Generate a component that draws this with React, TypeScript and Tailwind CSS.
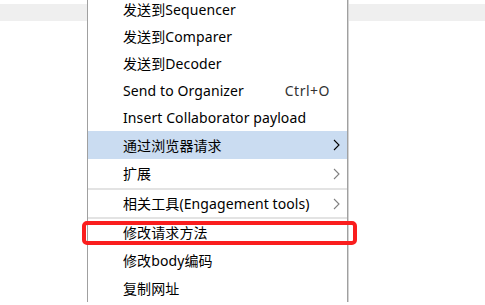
import React from "react";

type Item =
  | { kind: "item"; label: string; h: number; shortcut?: string; sub?: boolean; active?: boolean }
  | { kind: "sep" };

const items: Item[] = [
  { kind: "item", label: "发送到Sequencer", h: 27 },
  { kind: "item", label: "发送到Comparer", h: 27 },
  { kind: "item", label: "发送到Decoder", h: 27 },
  { kind: "item", label: "Send to Organizer", h: 27, shortcut: "Ctrl+O" },
  { kind: "item", label: "Insert Collaborator payload", h: 27 },
  { kind: "item", label: "通过浏览器请求", h: 28, sub: true, active: true },
  { kind: "item", label: "扩展", h: 29, sub: true },
  { kind: "sep" },
  { kind: "item", label: "相关工具(Engagement tools)", h: 27, sub: true },
  { kind: "sep" },
  { kind: "item", label: "修改请求方法", h: 27 },
  { kind: "item", label: "修改body编码", h: 28 },
  { kind: "item", label: "复制网址", h: 28 },
];

function Chevron({ dark }: { dark?: boolean }) {
  return (
    <svg width="7" height="12" viewBox="0 0 7 12" className="mr-[7px]">
      <path d="M1 1 L6 6 L1 11" fill="none" stroke={dark ? "#000" : "#808080"} strokeWidth="1.1" />
    </svg>
  );
}

export default function App() {
  return (
    <div
      className="relative w-[485px] h-[305px] overflow-hidden bg-white"
      style={{ fontFamily: '"Noto Sans", "Noto Sans CJK SC", sans-serif' }}
    >
      <div className="mt-[4px] h-[17px] bg-[#efefef]" />
      <div className="absolute left-[87px] top-[-4px] w-[261px] bg-white border-x border-[#a0a0a0] shadow-[1px_0_0_#d4d4d4] flex flex-col">
        {items.map((it, i) =>
          it.kind === "sep" ? (
            <div key={i} className="h-[2px] bg-[#e3e3e3]" />
          ) : (
            <div
              key={i}
              className={`flex items-center justify-between text-[14px] tracking-[0.1px] text-black ${it.active ? "bg-[#cadcf1]" : ""}`}
              style={{ height: it.h }}
            >
              <span className="pl-[35px] whitespace-nowrap">{it.label}</span>
              {it.shortcut ? (
                <span className="pr-[17px] text-[#333] tracking-[0.5px]">{it.shortcut}</span>
              ) : it.sub ? (
                <Chevron dark={it.active} />
              ) : null}
            </div>
          )
        )}
      </div>
      <div className="absolute left-[82px] top-[221px] w-[275px] h-[24px] border-4 border-[#fa1e1e] rounded-[5px]" />
    </div>
  );
}
